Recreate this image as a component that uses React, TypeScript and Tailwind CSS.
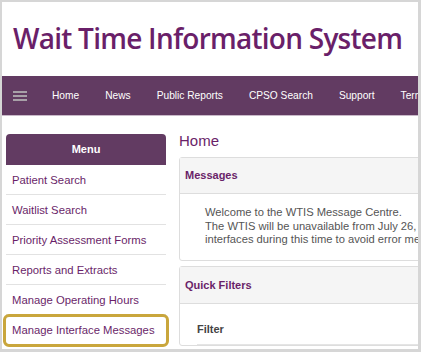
const navItems = ["Home", "News", "Public Reports", "CPSO Search", "Support", "Terms"];

const menuItems = [
  "Patient Search",
  "Waitlist Search",
  "Priority Assessment Forms",
  "Reports and Extracts",
  "Manage Operating Hours",
];

const App = () => {
  return (
    <div className="w-[421px] h-[352px] bg-white overflow-hidden">
      <div className="w-[421px] h-[352px] border-t-2 border-l-2 border-r-[3px] border-b-[3px] border-[#d6d6d6] overflow-hidden relative font-['Liberation_Sans',Arial,sans-serif]">
        {/* title */}
        <div className="h-[74px] pl-[11px] pt-[16px]">
          <h1 className="font-['Open_Sans',sans-serif] font-semibold text-[28px] leading-[40px] tracking-[-0.75px] text-[#6a1f69] whitespace-nowrap">
            Wait Time Information System
          </h1>
        </div>

        {/* nav */}
        <div className="h-[40px] bg-[#623b62] border-b border-[#c9b9c9] flex items-center whitespace-nowrap">
          <svg className="ml-[11px] shrink-0" width="14" height="10" viewBox="0 0 14 10">
            <rect x="0" y="0" width="14" height="2" fill="#a8a0a8" />
            <rect x="0" y="4" width="14" height="2" fill="#a8a0a8" />
            <rect x="0" y="8" width="14" height="2" fill="#a8a0a8" />
          </svg>
          <div className="flex ml-[25px] gap-[26px] text-[10.2px] text-white">
            {navItems.map((n) => (
              <span key={n}>{n}</span>
            ))}
          </div>
        </div>

        {/* body */}
        <div className="flex pt-[18px]">
          <div className="ml-[4px] w-[160px] shrink-0">
            <div className="h-[31px] bg-[#623b62] rounded-t-[4px] flex items-center justify-center text-white text-[11px] font-bold">
              Menu
            </div>
            {menuItems.map((m) => (
              <div
                key={m}
                className="h-[30px] border-b border-[#e2e2e2] flex items-center pl-[6px] pt-[1px] text-[11.3px] text-[#6a1f69]"
              >
                {m}
              </div>
            ))}
            <div className="-ml-[3px] -mt-[1px] w-[166px] h-[33px] border-[3px] border-[#c9a63c] rounded-[6px] flex items-center pl-[6px] text-[11.3px] text-[#6a1f69]">
              Manage Interface Messages
            </div>
          </div>

          <div className="ml-[13px] w-[300px] shrink-0 -mt-[2px]">
            <div className="text-[15px] leading-[18px] text-[#6a1f69] mb-[7px]">Home</div>

            <div className="border border-[#dddddd] rounded-[3px]">
              <div className="h-[36px] bg-[#f5f5f5] border-b border-[#dddddd] flex items-center pl-[5px] text-[11px] font-bold text-[#6a1f69]">
                Messages
              </div>
              <div className="h-[66px] pl-[25px] pt-[12px] text-[11.2px] leading-[13.5px] text-[#555555] whitespace-nowrap">
                <div>Welcome to the WTIS Message Centre.</div>
                <div>The WTIS will be unavailable from July 26, 2021 from</div>
                <div>interfaces during this time to avoid error messages.</div>
              </div>
            </div>

            <div className="mt-[5px] border border-[#dddddd] rounded-[3px]">
              <div className="h-[37px] bg-[#f5f5f5] border-b border-[#dddddd] flex items-center pl-[5px] text-[11px] font-bold text-[#6a1f69]">
                Quick Filters
              </div>
              <div className="pl-[17px] pt-[17px] text-[11px] font-bold text-[#444444]">
                <div className="pb-[6px] border-b border-[#e5e5e5]">Filter</div>
              </div>
            </div>
          </div>
        </div>
      </div>
    </div>
  );
};

export default App;
